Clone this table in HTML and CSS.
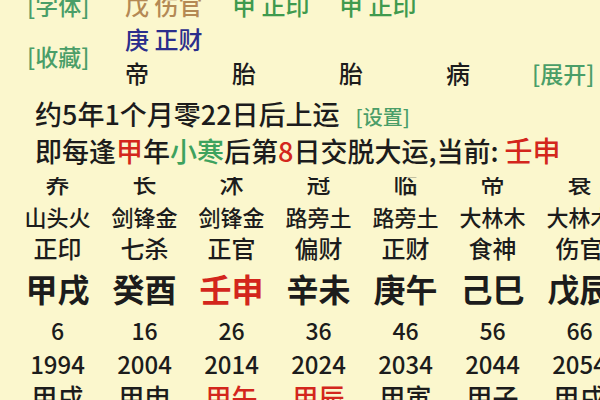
FILE: index.html
```html
<!DOCTYPE html>
<html lang="zh">
<head>
<meta charset="utf-8">
<link rel="stylesheet" href="styles.css">
</head>
<body>
<div class="page">
  <div class="top">
    <div class="label">[字体]</div>
    <div class="brown">戊 伤官</div>
    <div class="green">甲 正印</div>
    <div class="green">甲 正印</div>
    <div></div>
    <div></div>

    <div class="label span2">[收藏]</div>
    <div class="navy">庚 正财</div>
    <div></div>
    <div></div>
    <div></div>
    <div></div>

    <div class="dark">帝</div>
    <div class="dark">胎</div>
    <div class="dark">胎</div>
    <div class="dark">病</div>
    <div class="label">[展开]</div>
  </div>

  <div class="line line4">约5年1个月零22日后上运<span class="label set">[设置]</span></div>
  <div class="line line5">即每逢<span class="red">甲</span>年<span class="green2">小寒</span>后第<span class="red">8</span>日交脱大运,当前: <span class="red big">壬申</span></div>

  <div class="clip">
    <div class="row cs">
      <div>养</div><div>长</div><div>沐</div><div>冠</div><div>临</div><div>帝</div><div>衰</div>
    </div>
  </div>

  <div class="row nayin">
    <div>山头火</div><div>剑锋金</div><div>剑锋金</div><div>路旁土</div><div>路旁土</div><div>大林木</div><div>大林木</div>
  </div>
  <div class="row shishen">
    <div>正印</div><div>七杀</div><div>正官</div><div>偏财</div><div>正财</div><div>食神</div><div>伤官</div>
  </div>
  <div class="row ganzhi">
    <div>甲戌</div><div>癸酉</div><div class="red">壬申</div><div>辛未</div><div>庚午</div><div>己巳</div><div>戊辰</div>
  </div>
  <div class="row age">
    <div>6</div><div>16</div><div>26</div><div>36</div><div>46</div><div>56</div><div>66</div>
  </div>
  <div class="row year">
    <div>1994</div><div>2004</div><div>2014</div><div>2024</div><div>2034</div><div>2044</div><div>2054</div>
  </div>
  <div class="row liunian">
    <div>甲戌</div><div>甲申</div><div class="red">甲午</div><div class="red">甲辰</div><div>甲寅</div><div>甲子</div><div>甲戌</div>
  </div>
</div>
</body>
</html>
```

FILE: styles.css
```css
html, body {
  margin: 0;
  padding: 0;
  width: 600px;
  height: 400px;
  overflow: hidden;
  background: #fbf7cd;
}

.page {
  width: 600px;
  overflow: hidden;
  margin-top: -12px;
  font-family: "Noto Sans CJK SC", "Noto Sans", sans-serif;
  font-weight: 500;
  color: #1c1c1c;
}

.top {
  display: grid;
  grid-template-columns: 125px 107px 107px 107px 86px auto;
  grid-auto-rows: 34px;
  align-items: center;
  font-size: 24px;
  line-height: 34px;
  white-space: nowrap;
}

.top .label {
  padding-left: 27px;
  font-size: 23px;
}

.top .span2 {
  grid-row: span 2;
}

.top div:last-child {
  padding-left: 0;
}

.label { color: #4a9e68; }
.brown { color: #b48954; }
.green { color: #3f9a4e; }
.green2 { color: #3da25e; }
.navy { color: #2b2e8c; }
.red { color: #d3261c; }
.dark { color: #1c1c1c; }

.line {
  padding-left: 35px;
  height: 36px;
  line-height: 36px;
  font-size: 27px;
  white-space: nowrap;
}

.line4 { margin-top: 6px; }

.set {
  font-size: 20px;
  margin-left: 16px;
}

.big { font-size: 28px; }

.row {
  display: grid;
  grid-template-columns: repeat(7, 87px);
  padding-left: 14px;
  text-align: center;
  white-space: nowrap;
}

.clip {
  margin-top: 9px;
  height: 19px;
  overflow: hidden;
}

.cs {
  margin-top: -7px;
  font-size: 24px;
  line-height: 26px;
}

.nayin {
  margin-top: 4px;
  font-size: 22px;
  line-height: 32px;
}

.shishen {
  font-size: 24px;
  line-height: 32px;
}

.ganzhi {
  font-size: 32px;
  font-weight: 700;
  line-height: 48px;
}

.age {
  font-size: 23px;
  line-height: 36px;
}

.year {
  font-size: 24px;
  line-height: 32px;
}

.liunian {
  font-size: 26px;
  line-height: 34px;
}
```
